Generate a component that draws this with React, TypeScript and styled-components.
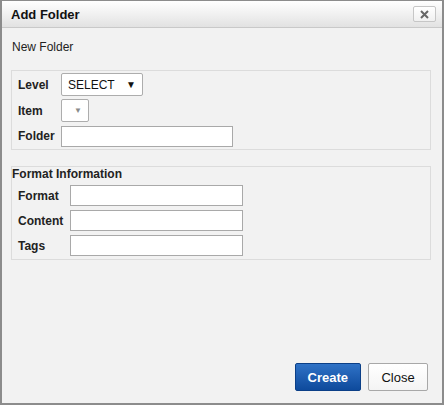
import React from "react";
import styled, { createGlobalStyle } from "styled-components";

// Page reset
const GlobalStyle = createGlobalStyle`
    html, body {
        margin: 0;
        padding: 0;
        background: #f2f2f2;
    }
    * {
        box-sizing: border-box;
    }
`;

// Dialog shell
const Dialog = styled.div`
    width: 444px;
    height: 405px;
    display: flex;
    flex-direction: column;
    background: #f2f2f2;
    border-style: solid;
    border-color: #8c8c8c;
    border-width: 1px 2px 2px 2px;
    font-family: "Liberation Sans", Arial, sans-serif;
    color: #222;
`;

const TitleBar = styled.div`
    height: 27px;
    flex: none;
    display: flex;
    align-items: center;
    justify-content: space-between;
    padding: 0 6px 0 9px;
    background: linear-gradient(#ffffff, #e2e2e2);
    border-bottom: 1px solid #c9c9c9;
`;

const Title = styled.div`
    font-size: 13px;
    font-weight: bold;
    color: #111;
`;

const CloseX = styled.button`
    width: 23px;
    height: 16px;
    padding: 0;
    display: flex;
    align-items: center;
    justify-content: center;
    background: linear-gradient(#ffffff, #f0f0f0);
    border: 1px solid #c6c6c6;
    border-radius: 2px;
`;

const Body = styled.div`
    flex: 1;
    padding: 12px 11px 0 7px;
    display: flex;
    flex-direction: column;
`;

const Intro = styled.div`
    font-size: 12px;
    color: #222;
    margin: 0 0 16px 3px;
`;

const Group = styled.div<{ $gap: number; $pad: string }>`
    border: 1px solid #dcdcdc;
    padding: ${(p) => p.$pad};
    margin: 0 0 0 2px;
    display: flex;
    flex-direction: column;
    gap: ${(p) => p.$gap}px;
    & + & {
        margin-top: 16px;
    }
`;

const Legend = styled.div`
    font-size: 12px;
    font-weight: bold;
    margin: 0 0 0 -6px;
    line-height: 14px;
`;

const Row = styled.div<{ $label: number; $h: number }>`
    display: grid;
    grid-template-columns: ${(p) => p.$label}px auto;
    align-items: center;
    height: ${(p) => p.$h}px;
`;

const Label = styled.label`
    font-size: 12px;
    font-weight: bold;
    color: #222;
`;

const TextInput = styled.input`
    width: ${(p) => p.width ?? 172}px;
    height: 21px;
    border: 1px solid #a9a9a9;
    background: #fff;
    margin: 0;
    padding: 0 3px;
`;

const SelectBox = styled.div<{ $w: number }>`
    width: ${(p) => p.$w}px;
    height: 23px;
    display: flex;
    align-items: center;
    justify-content: space-between;
    padding: 0 6px 0 6px;
    background: #fff;
    border: 1px solid #adadad;
    border-radius: 2px;
    font-size: 12px;
    color: #111;
`;

const Caret = styled.span<{ $muted?: boolean }>`
    font-size: ${(p) => (p.$muted ? 8 : 10)}px;
    color: ${(p) => (p.$muted ? "#8a8a8a" : "#111")};
`;

const Footer = styled.div`
    flex: none;
    display: flex;
    justify-content: flex-end;
    gap: 7px;
    padding: 0 14px 12px 0;
`;

const Button = styled.button<{ $primary?: boolean }>`
    height: 28px;
    padding: 0 12px;
    min-width: 60px;
    font-family: "Liberation Sans", Arial, sans-serif;
    font-size: 13px;
    font-weight: ${(p) => (p.$primary ? "bold" : "normal")};
    color: ${(p) => (p.$primary ? "#fff" : "#111")};
    background: ${(p) =>
        p.$primary
            ? "linear-gradient(#2f72c6, #0e4a9c)"
            : "linear-gradient(#ffffff, #f4f4f4)"};
    border: 1px solid ${(p) => (p.$primary ? "#0b3f87" : "#a8a8a8")};
    border-radius: 2px;
`;

export default function App() {
    return (
        <>
            <GlobalStyle />
            <Dialog>
                <TitleBar>
                    <Title>Add Folder</Title>
                    <CloseX aria-label="close">
                        <svg width="9" height="9" viewBox="0 0 9 9">
                            <path d="M1 1L8 8M8 1L1 8" stroke="#666" strokeWidth="2" />
                        </svg>
                    </CloseX>
                </TitleBar>
                <Body>
                    <Intro>New Folder</Intro>
                    <Group $gap={3} $pad="2px 6px 2px 6px">
                        <Row $label={43} $h={23}>
                            <Label>Level</Label>
                            <SelectBox $w={82}>
                                SELECT <Caret>▼</Caret>
                            </SelectBox>
                        </Row>
                        <Row $label={43} $h={23}>
                            <Label>Item</Label>
                            <SelectBox $w={28}>
                                <span />
                                <Caret $muted>▼</Caret>
                            </SelectBox>
                        </Row>
                        <Row $label={43} $h={22}>
                            <Label>Folder</Label>
                            <TextInput width={172} />
                        </Row>
                    </Group>
                    <Group $gap={4} $pad="0 6px 3px 6px">
                        <Legend>Format Information</Legend>
                        <Row $label={52} $h={21}>
                            <Label>Format</Label>
                            <TextInput width={173} />
                        </Row>
                        <Row $label={52} $h={21}>
                            <Label>Content</Label>
                            <TextInput width={173} />
                        </Row>
                        <Row $label={52} $h={21}>
                            <Label>Tags</Label>
                            <TextInput width={173} />
                        </Row>
                    </Group>
                </Body>
                <Footer>
                    <Button $primary>Create</Button>
                    <Button>Close</Button>
                </Footer>
            </Dialog>
        </>
    );
}
